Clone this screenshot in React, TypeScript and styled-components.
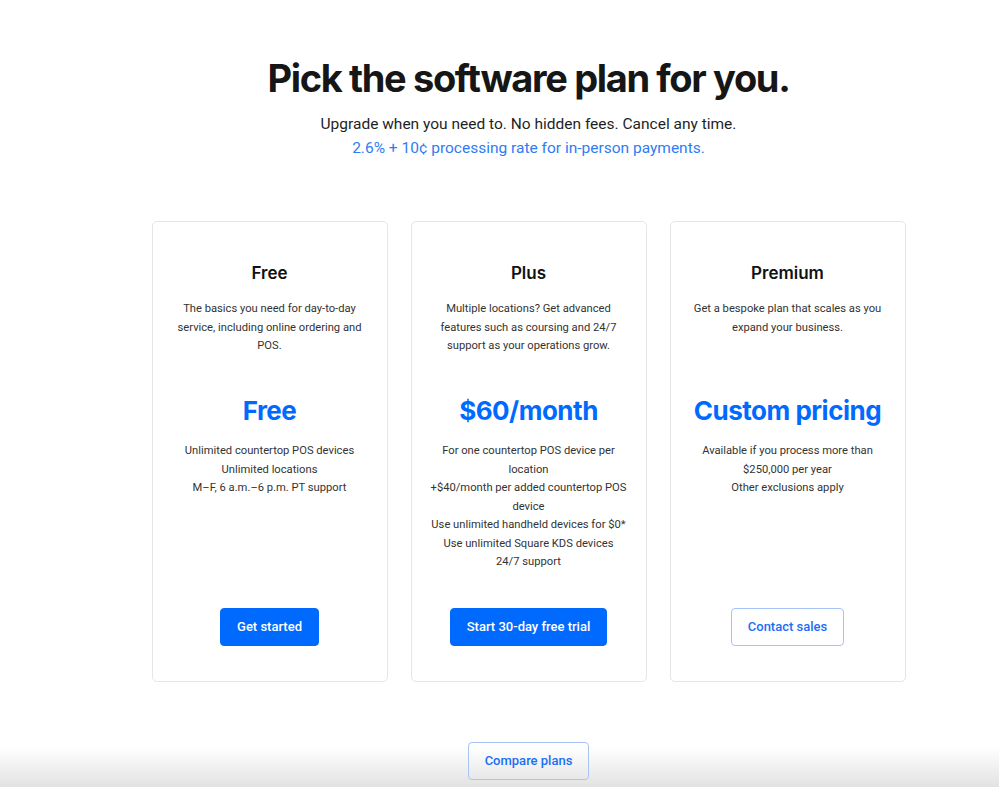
import React from 'react'
import styled, { createGlobalStyle } from 'styled-components'

type Plan = {
  name: string
  description: string[]
  price: string
  features: string[]
  cta: string
  outline?: boolean
}

const PLANS: Plan[] = [
  {
    name: 'Free',
    description: ['The basics you need for day-to-day', 'service, including online ordering and', 'POS.'],
    price: 'Free',
    features: ['Unlimited countertop POS devices', 'Unlimited locations', 'M–F, 6 a.m.–6 p.m. PT support'],
    cta: 'Get started',
  },
  {
    name: 'Plus',
    description: ['Multiple locations? Get advanced', 'features such as coursing and 24/7', 'support as your operations grow.'],
    price: '$60/month',
    features: [
      'For one countertop POS device per',
      'location',
      '+$40/month per added countertop POS',
      'device',
      'Use unlimited handheld devices for $0*',
      'Use unlimited Square KDS devices',
      '24/7 support',
    ],
    cta: 'Start 30-day free trial',
  },
  {
    name: 'Premium',
    description: ['Get a bespoke plan that scales as you', 'expand your business.'],
    price: 'Custom pricing',
    features: ['Available if you process more than', '$250,000 per year', 'Other exclusions apply'],
    cta: 'Contact sales',
    outline: true,
  },
]

export default function App() {
  return (
    <Page>
      <Global />
      <Main>
        <Header>
          <Title>Pick the software plan for you.</Title>
          <Subtitle>Upgrade when you need to. No hidden fees. Cancel any time.</Subtitle>
          <RateLink>2.6% + 10¢ processing rate for in-person payments.</RateLink>
        </Header>
        <Cards>
          {PLANS.map((plan) => (
            <Card key={plan.name}>
              <PlanName>{plan.name}</PlanName>
              <Description>
                {plan.description.map((line) => (
                  <Line key={line}>{line}</Line>
                ))}
              </Description>
              <Price>{plan.price}</Price>
              <Features>
                {plan.features.map((line) => (
                  <Line key={line}>{line}</Line>
                ))}
              </Features>
              <Button $outline={plan.outline}>{plan.cta}</Button>
            </Card>
          ))}
        </Cards>
      </Main>
      <Footer>
        <Button $outline>Compare plans</Button>
      </Footer>
    </Page>
  )
}

const Global = createGlobalStyle`
  * {
    box-sizing: border-box;
  }

  html, body, #root {
    margin: 0;
    padding: 0;
    background: #fff;
    font-family: Roboto, 'Noto Sans', sans-serif;
    color: #1a1a1a;
    -webkit-font-smoothing: antialiased;
  }
`

const Page = styled.div`
  min-height: 787px;
  display: flex;
  flex-direction: column;
`

const Main = styled.main`
  display: flex;
  flex-direction: column;
  align-items: center;
  padding-left: 58px;
`

const Header = styled.header`
  display: flex;
  flex-direction: column;
  align-items: center;
  padding-top: 54px;
`

const Title = styled.h1`
  margin: 0;
  font-family: Inter, sans-serif;
  font-size: 38px;
  line-height: 48px;
  font-weight: 700;
  letter-spacing: -1.35px;
  color: #161616;
`

const Subtitle = styled.p`
  margin: 10px 0 0;
  font-size: 15.5px;
  line-height: 24px;
  color: #1f1f1f;
`

const RateLink = styled.a`
  font-size: 15.5px;
  line-height: 24px;
  color: #2f7cf2;
  cursor: pointer;
`

const Cards = styled.div`
  display: grid;
  grid-template-columns: repeat(3, 236px);
  gap: 23px;
  margin-top: 61px;
`

const Card = styled.div`
  display: flex;
  flex-direction: column;
  align-items: center;
  text-align: center;
  padding: 39px 12px 35px;
  border: 1px solid #e6e6e6;
  border-radius: 5px;
  background: #fff;
`

const PlanName = styled.h2`
  margin: 0;
  font-family: Inter, sans-serif;
  font-size: 17px;
  line-height: 24px;
  font-weight: 600;
  color: #111;
`

const Description = styled.div`
  margin-top: 15px;
  min-height: 56px;
  font-size: 11.2px;
  line-height: 18.5px;
  color: #333;
`

const Line = styled.div`
  white-space: nowrap;
`

const Price = styled.div`
  margin-top: 39px;
  font-family: Inter, sans-serif;
  font-size: 26px;
  line-height: 32px;
  font-weight: 700;
  letter-spacing: -0.5px;
  color: #006aff;
`

const Features = styled.div`
  flex: 1;
  margin-top: 15px;
  font-size: 11.2px;
  line-height: 18.5px;
  color: #333;
`

const Button = styled.button<{ $outline?: boolean }>`
  margin-top: 36px;
  height: 38px;
  padding: 0 16px;
  border-radius: 4px;
  font-family: Roboto, sans-serif;
  font-size: 13px;
  font-weight: 500;
  cursor: pointer;
  color: ${(p) => (p.$outline ? '#1b6ef5' : '#fff')};
  background: ${(p) => (p.$outline ? 'transparent' : '#006aff')};
  border: 1px solid ${(p) => (p.$outline ? '#a8c3f7' : '#006aff')};
`

const Footer = styled.footer`
  flex: 1;
  display: flex;
  justify-content: center;
  align-items: flex-start;
  padding: 24px 0 0 58px;
  background: linear-gradient(to bottom, #fff 0, #fff 62%, #e2e2e2 100%);
`
